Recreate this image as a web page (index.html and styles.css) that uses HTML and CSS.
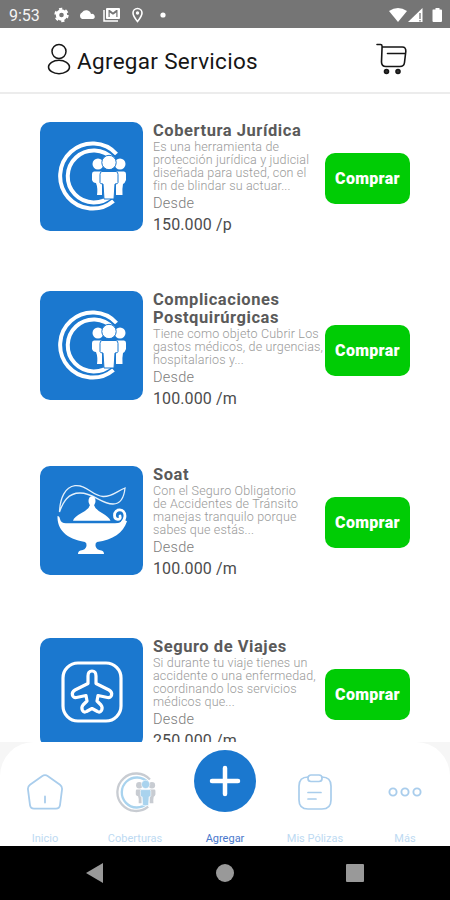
FILE: index.html
```html
<!DOCTYPE html>
<html lang="es">
<head>
    <meta charset="utf-8">
    <title>Agregar Servicios</title>
    <meta name="viewport" content="width=device-width, initial-scale=1">
    <link rel="stylesheet" href="styles.css">
</head>
<body>

<!-- shared symbols -->
<svg class="defs" aria-hidden="true">
    <symbol id="people" viewBox="0 0 71 71">
        <path class="outer" d="M60.500 13A32.500 32.500 0 1 0 57.500 60"/>
        <path class="inner" d="M57 18A26 26 0 1 0 56 54"/>
        <g class="side">
            <circle cx="42" cy="23" r="5.500"/>
            <circle cx="64" cy="23" r="5.500"/>
            <path d="M38 30.500h8v23.500h-5q1-7-1-12-3 0-4-3v-6q0-2.500 2-2.500zM60 30.500h8q2 0 2 2.500v6q-1 3-3 4-1 5-.500 11H60z"/>
        </g>
        <g class="middle">
            <circle cx="53" cy="21.500" r="7.200"/>
            <path d="M46 30.500h14q2 0 2 3v8q0 1.500-3 1.500l-1 15H48l-1-15q-3 0-3-1.500v-8q0-3 2-3z"/>
        </g>
    </symbol>
</svg>

<div class="screen">
    <div class="status">
        <span class="clock">9:53</span>
        <svg class="status-icons" width="120" height="18" viewBox="0 0 120 18" fill="white">
            <circle cx="9.500" cy="9" r="4" fill="none" stroke="white" stroke-width="3.400"/>
            <circle cx="9.500" cy="9" r="6.200" fill="none" stroke="white" stroke-width="2" stroke-dasharray="3.250 3.250"/>
            <path d="M30 13a3.600 3.600 0 0 1 0-6.500 5 5 0 0 1 9 1.500 2.600 2.600 0 0 1 2 5z"/>
            <path d="M52 4v11h14" fill="none" stroke="white" stroke-width="1.500"/>
            <path d="M55 2h12q1 0 1 1v9q0 1-1 1H55q-1 0-1-1V3q0-1 1-1zm1.500 9h1.200V6.500l3.300 2.200 3.300-2.200V11h1.200V4h-1.300L61 6.500 57.800 4h-1.300z" fill-rule="evenodd"/>
            <path d="M85.500 15.500Q81 10 81 7a4.500 4.500 0 0 1 9 0q0 3-4.500 8.500z" fill="none" stroke="white" stroke-width="1.600"/>
            <circle cx="85.500" cy="7" r="1.700"/>
            <circle cx="111" cy="9" r="2.600"/>
        </svg>
        <svg class="signal" width="54" height="18" viewBox="0 0 54 18" fill="white">
            <path d="M0 5q9-6 18 0L9 16z"/>
            <path d="M19 16 33.500 2v14z"/>
            <path d="M31 7v6M31 14v1.500" stroke="#757575" stroke-width="1.300"/>
            <path d="M44 3.500h2.500V2h4v1.500H52q1 0 1 1V15q0 1-1 1h-7.500q-1 0-1-1V4.500q0-1 .5-1z"/>
        </svg>
    </div>

    <header>
        <svg class="user" width="24" height="32" viewBox="0 0 24 32" fill="none" stroke="#161616" stroke-width="1.500">
            <circle cx="12" cy="8.500" r="7"/>
            <ellipse cx="12" cy="24" rx="10.500" ry="6.700"/>
        </svg>
        <h1>Agregar Servicios</h1>
        <svg class="cart" width="32" height="32" viewBox="0 0 32 32" fill="none" stroke="#161616" stroke-width="1.600" stroke-linecap="round" stroke-linejoin="round">
            <path d="M1 1.500h3.500q1.500 0 1.600 1.700L5.500 19q0 4.500 4.500 4.500h14q4 0 4.500-4l1.300-11q.3-4.500-3.500-4.500H6.500M11.500 10.500h17.500"/>
            <circle cx="10.500" cy="28.500" r="2" fill="#333"/>
            <circle cx="22" cy="28.500" r="2" fill="#333"/>
        </svg>
    </header>

    <main>
        <div class="service">
            <div class="tile"><svg class="people" width="71" height="71"><use href="#people"/></svg></div>
            <div class="info">
                <h2>Cobertura Jurídica</h2>
                <p>Es una herramienta de<br>protección jurídica y judicial<br>diseñada para usted, con el<br>fin de blindar su actuar...</p>
                <div class="from">Desde</div>
                <div class="price">150.000 /p</div>
            </div>
            <button>Comprar</button>
        </div>

        <div class="service">
            <div class="tile"><svg class="people" width="71" height="71"><use href="#people"/></svg></div>
            <div class="info">
                <h2>Complicaciones<br>Postquirúrgicas</h2>
                <p>Tiene como objeto Cubrir Los<br>gastos médicos, de urgencias,<br>hospitalarios y...</p>
                <div class="from">Desde</div>
                <div class="price">100.000 /m</div>
            </div>
            <button>Comprar</button>
        </div>

        <div class="service">
            <div class="tile">
                <svg width="72" height="72" viewBox="0 0 72 72" fill="white">
                    <path d="M3.500 28C4 14 9 3 19 1.700 31 .5 36 12 47 12.500 56 13 61 7 69 4 68 14 64 20 57 20 45 20 38 9 24 9 12 9 7 18 3.500 28z" fill="none" stroke="#e4f0fb" stroke-width="1.300"/>
                    <ellipse cx="36" cy="17" rx="3.500" ry="4.800"/>
                    <path d="M34 21h4q1 4 8 8t8.500 7.700h-37.500Q18 33 25.500 29T34 21z"/>
                    <path d="M1.500 32q2 0 2.500 3 1 4.300 6 4.300h49q7 0 8-4l4 2C67 49 57 56 41 58q-2 1-1.500 4 1 4 6 4.500 2.500.5 2.500 3.500H22q0-3 2.500-3.500 5-.500 6-4.500.500-3-1.500-4C10 55 1 45 1.500 32z"/>
                    <path d="M65 40q4-4 4-8c0-8-10.500-8-10.500-.500 0 5 7 5 5.500.500" fill="none" stroke="white" stroke-width="2.800" stroke-linecap="round"/>
                </svg>
            </div>
            <div class="info">
                <h2>Soat</h2>
                <p>Con el Seguro Obligatorio<br>de Accidentes de Tránsito<br>manejas tranquilo porque<br>sabes que estás...</p>
                <div class="from">Desde</div>
                <div class="price">100.000 /m</div>
            </div>
            <button>Comprar</button>
        </div>

        <div class="service">
            <div class="tile">
                <svg width="62" height="62" viewBox="0 0 62 62" fill="none" stroke="white" stroke-width="3.200" stroke-linejoin="round">
                    <rect x="2" y="2" width="58" height="58" rx="15"/>
                    <path d="M27 15q0-5 4-5t4 5v7.500l13 6.500q3.500 2 2.500 5.500-1 2.500-4 2l-9.500-2-1 5.500 4 4q2 2.500.5 5.500-1.500 2.500-4 1l-5.500-3-5.500 3q-2.500 1.500-4-1-1.500-3 .5-5.500l4-4-1-5.500-9.500 2q-3 .5-4-2-1-3.500 2.500-5.500l13-6.500z"/>
                </svg>
            </div>
            <div class="info">
                <h2>Seguro de Viajes</h2>
                <p>Si durante tu viaje tienes un<br>accidente o una enfermedad,<br>coordinando los servicios<br>médicos que...</p>
                <div class="from">Desde</div>
                <div class="price">250.000 /m</div>
            </div>
            <button>Comprar</button>
        </div>
    </main>

    <div class="tabs-wrap">
        <nav class="tabs">
            <a class="tab">
                <svg width="36" height="36" viewBox="0 0 36 36" fill="none" stroke="#a9cdec" stroke-width="1.800" stroke-linecap="round" stroke-linejoin="round">
                    <path d="M15 2.200q3-2 6 0l12 8.500q2.500 2 2 5l-2 15.500q-.500 3.500-4 3.500H7q-3.500 0-4-3.500L1 15.700q-.500-3 2-5zM18 22.500v6"/>
                </svg>
                <span>Inicio</span>
            </a>
            <a class="tab">
                <svg class="people small" width="41" height="41"><use href="#people"/></svg>
                <span>Coberturas</span>
            </a>
            <a class="tab active">
                <svg class="add" width="62" height="62" viewBox="0 0 62 62">
                    <circle cx="31" cy="31" r="31" fill="#1b78cf"/>
                    <path d="M31 18v26M18 31h26" stroke="white" stroke-width="4.500" stroke-linecap="round"/>
                </svg>
                <span>Agregar</span>
            </a>
            <a class="tab">
                <svg width="34" height="36" viewBox="0 0 34 36" fill="none" stroke="#a9cdec" stroke-width="1.700" stroke-linecap="round">
                    <path d="M10 3q-9 0-9 9v14q0 9 9 9h14q9 0 9-9V12q0-9-9-9M10 18.500h13M10 25h8"/>
                    <rect x="10" y="1" width="14" height="6.500" rx="3"/>
                </svg>
                <span>Mis Pólizas</span>
            </a>
            <a class="tab">
                <svg width="34" height="10" viewBox="0 0 34 10" fill="none" stroke="#a9cdec" stroke-width="1.900">
                    <circle cx="5" cy="5" r="3.600"/>
                    <circle cx="17" cy="5" r="3.600"/>
                    <circle cx="29" cy="5" r="3.600"/>
                </svg>
                <span>Más</span>
            </a>
        </nav>
    </div>

    <div class="android">
        <svg width="18" height="20" viewBox="0 0 18 20" fill="#999"><path d="M0 10 17 0v20z"/></svg>
        <svg width="18" height="18" viewBox="0 0 18 18" fill="#999"><circle cx="9" cy="9" r="9"/></svg>
        <svg width="18" height="18" viewBox="0 0 18 18" fill="#999"><rect width="18" height="18" rx="1"/></svg>
    </div>
</div>

</body>
</html>
```

FILE: styles.css
```css
:root {
    --blue: #1b78cf;
    --green: #00cc05;
}

body {
    margin: 0;
    font-family: Roboto, sans-serif;
    background: white;
}

svg {
    display: block;
    flex: none;
}

.defs {
    position: absolute;
    width: 0;
    height: 0;
}

.screen {
    display: flex;
    flex-direction: column;
    width: 450px;
    height: 900px;
    overflow: hidden;
}

.status {
    display: flex;
    align-items: center;
    box-sizing: border-box;
    height: 28px;
    padding: 2px 7px 0 9px;
    background: #757575;
    color: #f4f4f4;
}

.clock {
    width: 43px;
    font-size: 16px;
}

.signal {
    margin-left: auto;
}

header {
    display: flex;
    align-items: center;
    box-sizing: border-box;
    height: 66px;
    padding: 0 42px 2px 47px;
    border-bottom: 2px solid #ececec;
}

h1 {
    margin: 3px 0 0 6px;
    font-size: 22.5px;
    font-weight: 400;
    letter-spacing: .3px;
    color: #161616;
}

.cart {
    margin-left: auto;
}

main {
    flex: 1;
    min-height: 0;
    overflow: hidden;
}

.service {
    display: grid;
    grid-template-columns: 103px 172px 85px;
    column-gap: 10px;
    align-content: center;
    height: 172px;
    margin-left: 40px;
}

.service:first-child {
    height: 168px;
    margin-bottom: 2px;
}

.tile {
    display: flex;
    align-items: center;
    justify-content: center;
    width: 103px;
    height: 109px;
    border-radius: 10px;
    background: var(--blue);
}

.info {
    white-space: nowrap;
}

h2 {
    margin: 0;
    font-size: 16.5px;
    font-weight: 700;
    line-height: 18px;
    letter-spacing: .55px;
    color: #5a5a5a;
}

.info p {
    margin: 0;
    font-size: 12.5px;
    font-weight: 300;
    line-height: 13px;
    letter-spacing: .17px;
    color: #999;
}

.from {
    font-size: 14.5px;
    font-weight: 300;
    line-height: 23px;
    letter-spacing: .3px;
    color: #7c7c7c;
}

.price {
    font-size: 16px;
    line-height: 20px;
    letter-spacing: .1px;
    color: #4c4c4c;
}

button {
    align-self: center;
    width: 85px;
    height: 51px;
    margin-left: -10px;
    padding: 0;
    border: none;
    border-radius: 10px;
    background: var(--green);
    color: white;
    font-family: inherit;
    font-size: 16px;
    font-weight: 900;
    letter-spacing: .3px;
}

/* the people logo takes its colours from whoever uses it */
.people {
    --main: white;
    --second: white;
    --gap: var(--blue);
}

.small {
    --main: #a9d3ee;
    --second: #c8ccd2;
    --gap: white;
}

.outer,
.inner {
    fill: none;
    stroke: var(--second);
    stroke-width: 4;
}

.inner {
    stroke: var(--main);
}

.side {
    fill: var(--second);
}

.middle {
    fill: var(--main);
    stroke: var(--gap);
    stroke-width: 1;
}

.tabs-wrap {
    height: 104px;
    background: #f6f6f6;
}

.tabs {
    display: grid;
    grid-template-columns: repeat(5, 90px);
    height: 104px;
    border-radius: 34px 34px 0 0;
    background: white;
}

.tab {
    display: grid;
    grid-template-rows: 76px 28px;
    place-items: center;
    font-size: 11px;
    color: #bddaf2;
}

.tab svg {
    margin-top: 24px;
}

.tab .add {
    margin-top: 2px;
}

.tab span {
    padding-top: 14px;
    line-height: 16px;
}

.active {
    color: #4a79cc;
}

.android {
    display: flex;
    align-items: center;
    justify-content: space-between;
    height: 54px;
    padding: 0 86px;
    background: black;
}
```
